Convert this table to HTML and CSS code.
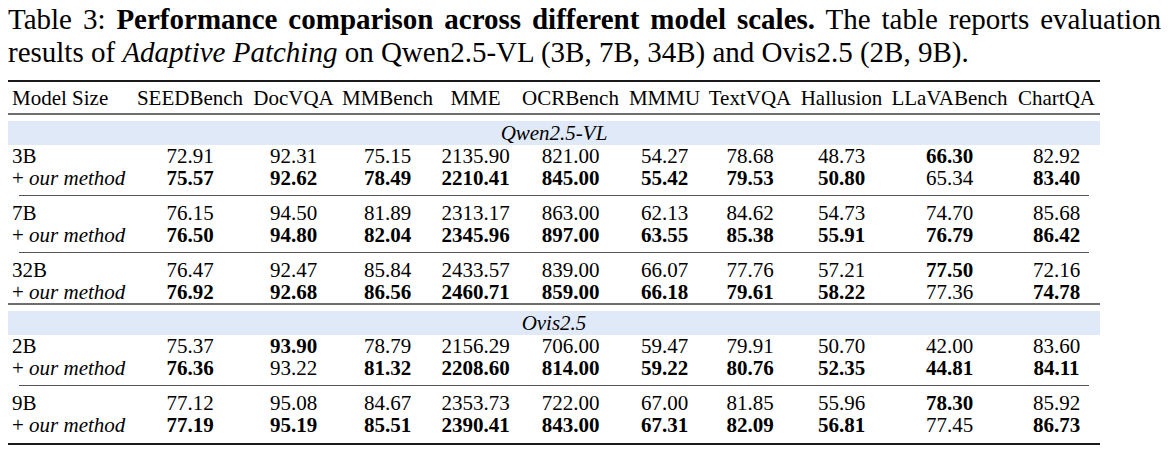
FILE: index.html
```html
<!DOCTYPE html>
<html>
<head>
<meta charset="utf-8">
<link rel="stylesheet" href="styles.css">
</head>
<body>
<div class="caption">
  <div class="cap-line first">Table 3: <b>Performance comparison across different model scales.</b> The table reports evaluation</div>
  <div class="cap-line">results of <i>Adaptive Patching</i> on Qwen2.5-VL (3B, 7B, 34B) and Ovis2.5 (2B, 9B).</div>
</div>
<div class="table">
  <div class="rule heavy"></div>
  <div class="row head">
    <span class="c0">Model Size</span><span>SEEDBench</span><span>DocVQA</span><span>MMBench</span><span>MME</span><span>OCRBench</span><span>MMMU</span><span>TextVQA</span><span>Hallusion</span><span>LLaVABench</span><span>ChartQA</span>
  </div>
  <div class="rule mid"></div>
  <div class="band"><i>Qwen2.5-VL</i></div>
  <div class="row"><span class="c0">3B</span><span>72.91</span><span>92.31</span><span>75.15</span><span>2135.90</span><span>821.00</span><span>54.27</span><span>78.68</span><span>48.73</span><span class="b">66.30</span><span>82.92</span></div>
  <div class="row"><span class="c0">+ <i>our method</i></span><span class="b">75.57</span><span class="b">92.62</span><span class="b">78.49</span><span class="b">2210.41</span><span class="b">845.00</span><span class="b">55.42</span><span class="b">79.53</span><span class="b">50.80</span><span>65.34</span><span class="b">83.40</span></div>
  <div class="rule cmid"></div>
  <div class="row"><span class="c0">7B</span><span>76.15</span><span>94.50</span><span>81.89</span><span>2313.17</span><span>863.00</span><span>62.13</span><span>84.62</span><span>54.73</span><span>74.70</span><span>85.68</span></div>
  <div class="row"><span class="c0">+ <i>our method</i></span><span class="b">76.50</span><span class="b">94.80</span><span class="b">82.04</span><span class="b">2345.96</span><span class="b">897.00</span><span class="b">63.55</span><span class="b">85.38</span><span class="b">55.91</span><span class="b">76.79</span><span class="b">86.42</span></div>
  <div class="rule cmid"></div>
  <div class="row"><span class="c0">32B</span><span>76.47</span><span>92.47</span><span>85.84</span><span>2433.57</span><span>839.00</span><span>66.07</span><span>77.76</span><span>57.21</span><span class="b">77.50</span><span>72.16</span></div>
  <div class="row"><span class="c0">+ <i>our method</i></span><span class="b">76.92</span><span class="b">92.68</span><span class="b">86.56</span><span class="b">2460.71</span><span class="b">859.00</span><span class="b">66.18</span><span class="b">79.61</span><span class="b">58.22</span><span>77.36</span><span class="b">74.78</span></div>
  <div class="rule mid"></div>
  <div class="band"><i>Ovis2.5</i></div>
  <div class="row"><span class="c0">2B</span><span>75.37</span><span class="b">93.90</span><span>78.79</span><span>2156.29</span><span>706.00</span><span>59.47</span><span>79.91</span><span>50.70</span><span>42.00</span><span>83.60</span></div>
  <div class="row"><span class="c0">+ <i>our method</i></span><span class="b">76.36</span><span>93.22</span><span class="b">81.32</span><span class="b">2208.60</span><span class="b">814.00</span><span class="b">59.22</span><span class="b">80.76</span><span class="b">52.35</span><span class="b">44.81</span><span class="b">84.11</span></div>
  <div class="rule cmid"></div>
  <div class="row"><span class="c0">9B</span><span>77.12</span><span>95.08</span><span>84.67</span><span>2353.73</span><span>722.00</span><span>67.00</span><span>81.85</span><span>55.96</span><span class="b">78.30</span><span>85.92</span></div>
  <div class="row"><span class="c0">+ <i>our method</i></span><span class="b">77.19</span><span class="b">95.19</span><span class="b">85.51</span><span class="b">2390.41</span><span class="b">843.00</span><span class="b">67.31</span><span class="b">82.09</span><span class="b">56.81</span><span>77.45</span><span class="b">86.73</span></div>
  <div class="rule heavy bottom"></div>
</div>
</body>
</html>
```

FILE: styles.css
```css
html, body {
  background: #ffffff;
}
body {
  margin: 3px 8px;
  font-family: "Liberation Serif", "Times New Roman", serif;
  color: #000;
}
.caption {
  width: 1153px;
  font-size: 29px;
  line-height: 33px;
}
.cap-line {
  white-space: nowrap;
}
.cap-line.first {
  text-align: justify;
  text-align-last: justify;
  white-space: normal;
}
.table {
  width: 1092px;
  margin-top: 11px;
  font-size: 21px;
  line-height: 22px;
}
.rule {
  height: 1px;
  background: #555;
}
.rule.heavy {
  height: 2px;
  background: #1a1a1a;
}
.rule.mid {
  height: 2px;
  background: #6e6e6e;
  margin-bottom: 6px;
}
.rule.cmid {
  margin: 6px 11px;
}
.rule.bottom {
  margin-top: 7px;
}
.row {
  display: grid;
  grid-template-columns: 124px 116px 91px 97px 79px 111px 77px 94px 89px 127px 87px;
  height: 22px;
  white-space: nowrap;
}
.row > span {
  text-align: center;
}
.row > span.c0 {
  text-align: left;
  padding-left: 4px;
}
.row.head {
  height: 31px;
  padding-top: 5px;
  box-sizing: border-box;
}
.b {
  font-weight: bold;
}
.band {
  background: #e0e9f8;
  height: 24px;
  line-height: 24px;
  text-align: center;
}
```
